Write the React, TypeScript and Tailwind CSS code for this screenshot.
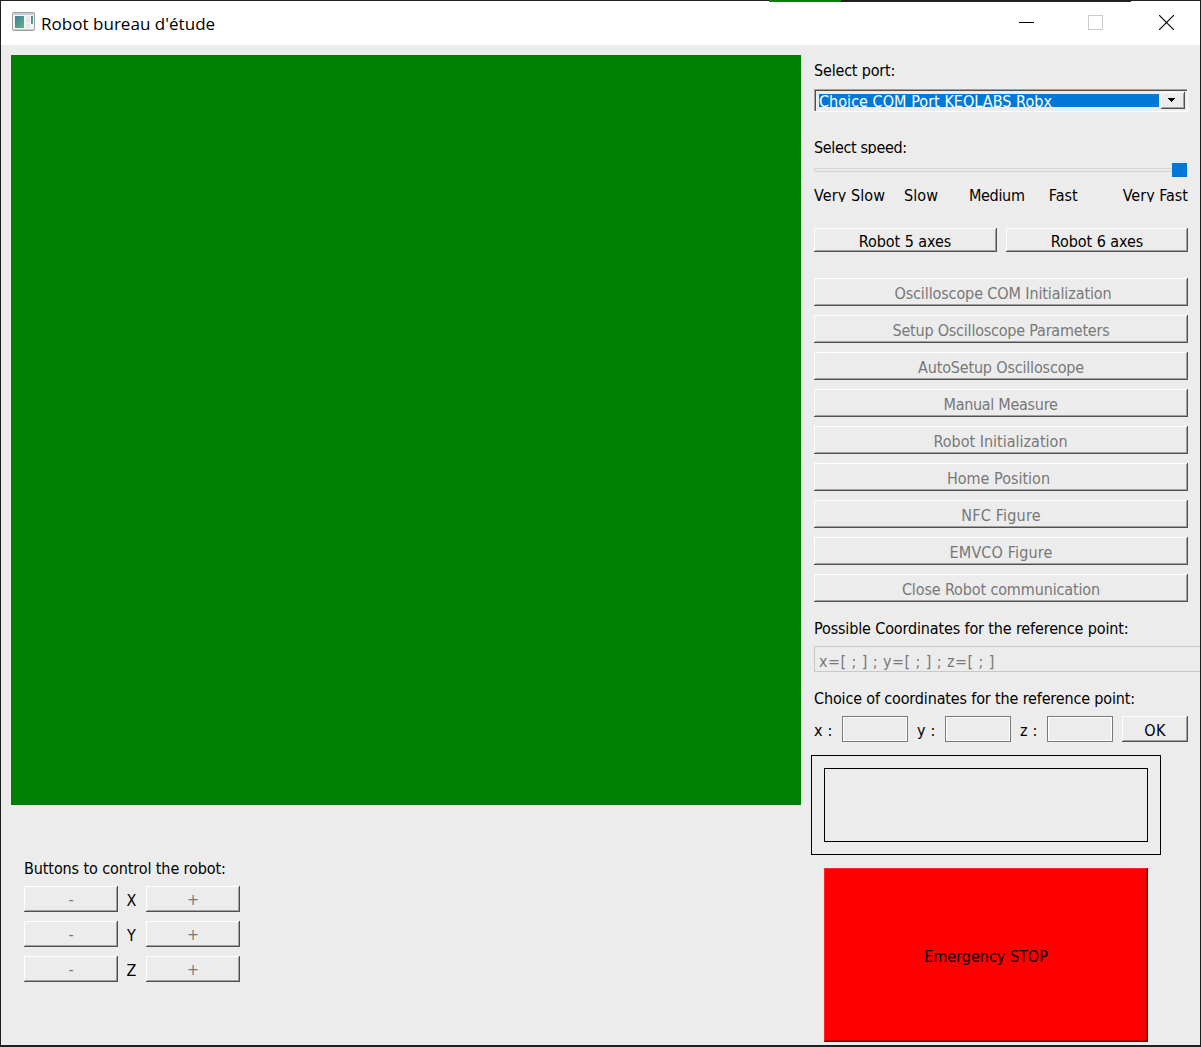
import React from "react";

const BEVEL =
  "block text-center whitespace-nowrap bg-[#ececec] shadow-[inset_-1px_-1px_0_#505050,inset_1px_1px_0_#ffffff,inset_-2px_-2px_0_#a0a0a0]";

type ButtonProps = { label: string; className: string; textClass?: string };

function Button({ label, className, textClass = "" }: ButtonProps) {
  return (
    <button className={`${BEVEL} ${className}`}>
      <span className={`block ${textClass}`}>{label}</span>
    </button>
  );
}

function Label({ text, className = "" }: { text: string; className?: string }) {
  return <div className={`h-[21px] leading-[21px] whitespace-nowrap ${className}`}>{text}</div>;
}

const ACTIONS: { label: string; textClass: string }[] = [
  { label: "Oscilloscope COM Initialization", textClass: "pl-1 tracking-[-0.11px]" },
  { label: "Setup Oscilloscope Parameters", textClass: "tracking-[-0.21px]" },
  { label: "AutoSetup Oscilloscope", textClass: "tracking-[-0.17px]" },
  { label: "Manual Measure", textClass: "pr-px tracking-[-0.29px]" },
  { label: "Robot Initialization", textClass: "pr-px tracking-normal" },
  { label: "Home Position", textClass: "pr-[5px] tracking-normal" },
  { label: "NFC Figure", textClass: "tracking-[0.2px]" },
  { label: "EMVCO Figure", textClass: "tracking-[0.14px]" },
  { label: "Close Robot communication", textClass: "tracking-[-0.13px]" },
];

function TitleBar() {
  return (
    <header className="flex h-11 shrink-0 items-start bg-white pl-[11px]">
      <svg className="mt-[11px] h-[19px] w-[23px]" viewBox="0 0 23 19">
        <defs>
          <linearGradient id="pane" x1="0" y1="0" x2="1" y2="1">
            <stop offset="0" stopColor="#3f7fa0" />
            <stop offset="1" stopColor="#62b57c" />
          </linearGradient>
        </defs>
        <rect x="0.5" y="0.5" width="22" height="18" rx="1" fill="#f4f4f4" stroke="#9a9fa5" />
        <rect x="1" y="1" width="21" height="2" fill="#c8ccd4" />
        <rect x="1" y="17" width="21" height="1" fill="#c8ccd0" />
        <rect x="3" y="4" width="9" height="12" fill="url(#pane)" />
        <rect x="14" y="4" width="4" height="7" fill="#e8e8e8" />
        <rect x="14" y="12" width="4" height="4" fill="#e8e8e8" />
        <rect x="19" y="4" width="2" height="8" fill="url(#pane)" />
      </svg>
      <h1 className="ml-[6px] h-11 font-['Open_Sans',sans-serif] text-[17px] leading-[46px] tracking-[0.03px]">
        Robot bureau d'étude
      </h1>
      <div className="ml-auto flex h-11 items-start">
        <svg className="mt-[14px] h-[15px] w-[15px]" viewBox="0 0 15 15" shapeRendering="crispEdges">
          <rect x="0" y="7" width="15" height="1" fill="#000" />
        </svg>
        <svg className="mt-[14px] ml-[54px] h-[15px] w-[15px]" viewBox="0 0 15 15">
          <rect x="0.5" y="0.5" width="14" height="14" fill="none" stroke="#cccccc" />
        </svg>
        <svg className="mt-[14px] mr-[26px] ml-[56px] h-[15px] w-[15px]" viewBox="0 0 15 15">
          <path d="M0 0L15 15M15 0L0 15" stroke="#000" strokeWidth="1.1" />
        </svg>
      </div>
    </header>
  );
}

function PortSelect() {
  return (
    <div className="mt-2 flex h-[23px] pt-[3px] pl-[5px] shadow-[inset_-1px_-1px_0_#ffffff,inset_1px_1px_0_#a0a0a0,inset_2px_2px_0_#505050]">
      <div className="mt-[2px] h-[13px] w-[340px] overflow-hidden bg-[#0078d7] text-white">
        <span className="-mt-px block leading-[17px] whitespace-nowrap tracking-[0.04px]">
          Choice COM Port KEOLABS Robx
        </span>
      </div>
      <button className="ml-[2px] flex h-[17px] w-6 items-start bg-[#ececec] pt-[6px] pl-[7px] shadow-[inset_-1px_-1px_0_#505050,inset_1px_1px_0_#ffffff,inset_-2px_-2px_0_#a0a0a0]">
        <svg className="h-1 w-[7px]" viewBox="0 0 7 4" shapeRendering="crispEdges">
          <path d="M0 0H7V1H6V2H5V3H4V4H3V3H2V2H1V1H0Z" fill="#000" />
        </svg>
      </button>
    </div>
  );
}

function SpeedSlider() {
  return (
    <>
      <div className="mt-[6px] flex h-[14px] items-center">
        <div className="h-1 w-[358px] border border-r-0 border-[#d6d6d6] bg-[#e7eaea]" />
        <div className="h-[14px] w-[15px] bg-[#0078d7]" />
        <div className="h-1 w-px bg-[#d6d6d6]" />
      </div>
      <div className="mt-[8px] flex h-[17px] overflow-hidden leading-[21px] whitespace-nowrap">
        <span className="w-[90px] tracking-[0.1px]">Very Slow</span>
        <span className="w-[65px] tracking-[0.1px]">Slow</span>
        <span className="w-[80px] tracking-[-0.3px]">Medium</span>
        <span className="w-[74px]">Fast</span>
        <span>Very Fast</span>
      </div>
    </>
  );
}

function CoordinateField({ name, className }: { name: string; className: string }) {
  return (
    <div className={`flex justify-between ${className}`}>
      <span className="leading-[29px] whitespace-pre tracking-[0.2px]">{name} :</span>
      <div className="h-[26px] w-[66px] border border-[#7a7a7a] shadow-[inset_0_0_0_1px_#ffffff]" />
    </div>
  );
}

function SidePanel() {
  return (
    <section className="ml-[13px] flex w-[374px] shrink-0 flex-col pt-[15px]">
      <Label text="Select port:" className="tracking-[-0.18px]" />
      <PortSelect />
      <div className="mt-[25px] h-[17px] overflow-hidden">
        <Label text="Select speed:" className="tracking-[-0.36px]" />
      </div>
      <div className="mt-[3px]">
        <SpeedSlider />
      </div>
      <div className="mt-[26px] flex justify-between">
        <Button label="Robot 5 axes" className="h-6 w-[183px] leading-[27px]" textClass="pr-px tracking-[-0.05px]" />
        <Button label="Robot 6 axes" className="h-6 w-[182px] leading-[27px]" textClass="tracking-[-0.05px]" />
      </div>
      <div className="mt-[26px] flex flex-col gap-[9px] text-[#787878]">
        {ACTIONS.map((a) => (
          <Button key={a.label} label={a.label} className="h-7 w-full leading-[31px]" textClass={a.textClass} />
        ))}
      </div>
      <Label text="Possible Coordinates for the reference point:" className="mt-4 tracking-[-0.14px]" />
      <div className="mt-[7px] h-[26px] w-[387px] overflow-hidden border border-[#c8c8c8] pl-1 leading-[29px] tracking-[0.42px] whitespace-nowrap text-[#787878]">
        x=[ ; ] ; y=[ ; ] ; z=[ ; ]
      </div>
      <Label text="Choice of coordinates for the reference point:" className="mt-4 tracking-[-0.15px]" />
      <div className="mt-[7px] flex h-[26px]">
        <CoordinateField name="x" className="w-[94px]" />
        <CoordinateField name="y" className="ml-[9px] w-[94px]" />
        <CoordinateField name="z" className="ml-[9px] w-[93px]" />
        <Button label="OK" className="ml-[9px] h-[26px] w-[66px] leading-[29px]" textClass="tracking-[0.3px]" />
      </div>
      <div className="mt-[13px] -ml-[3px] h-[100px] w-[350px] border border-black p-3">
        <div className="h-full border border-black" />
      </div>
      <button className="mt-[13px] ml-[10px] h-[174px] w-[324px] bg-[#ff0000] text-center leading-[177px] shadow-[inset_-1px_-1px_0_#6a0000,inset_1px_1px_0_#ff2626,inset_-2px_-2px_0_#b20000]">
        Emergency STOP
      </button>
    </section>
  );
}

function AxisControls() {
  return (
    <div className="mt-[53px] ml-[13px] flex flex-col">
      <Label text="Buttons to control the robot:" className="tracking-[-0.1px]" />
      <div className="mt-[7px] flex flex-col gap-[9px]">
        {["X", "Y", "Z"].map((axis) => (
          <div key={axis} className="flex h-[26px]">
            <Button label="-" className="h-[26px] w-[94px] leading-[28px] text-[#787878]" />
            <span className="w-7 pr-px text-center leading-[29px]">{axis}</span>
            <Button label="+" className="h-[26px] w-[94px] leading-[28px] text-[#787878]" />
          </div>
        ))}
      </div>
    </div>
  );
}

export default function App() {
  return (
    <div className="relative h-[1047px] w-[1201px] overflow-hidden [font-family:'DejaVu_Sans_Condensed','DejaVu_Sans',sans-serif] text-[16px] text-black">
      <div className="flex h-full w-full flex-col overflow-hidden border border-b-2 border-[#1f1f1f] bg-[#ececec]">
        <TitleBar />
        <main className="flex min-h-0 flex-1">
          <section className="ml-[10px] flex w-[790px] shrink-0 flex-col pt-[10px]">
            <div className="h-[750px] w-[790px] shrink-0 bg-[#008000]" />
            <AxisControls />
          </section>
          <SidePanel />
        </main>
      </div>
      <div className="absolute top-0 left-[769px] flex h-0.5 w-[362px]">
        <div className="w-[72px] bg-[#107c10]" />
        <div className="flex-1 bg-[#1f1f1f]" />
      </div>
    </div>
  );
}
